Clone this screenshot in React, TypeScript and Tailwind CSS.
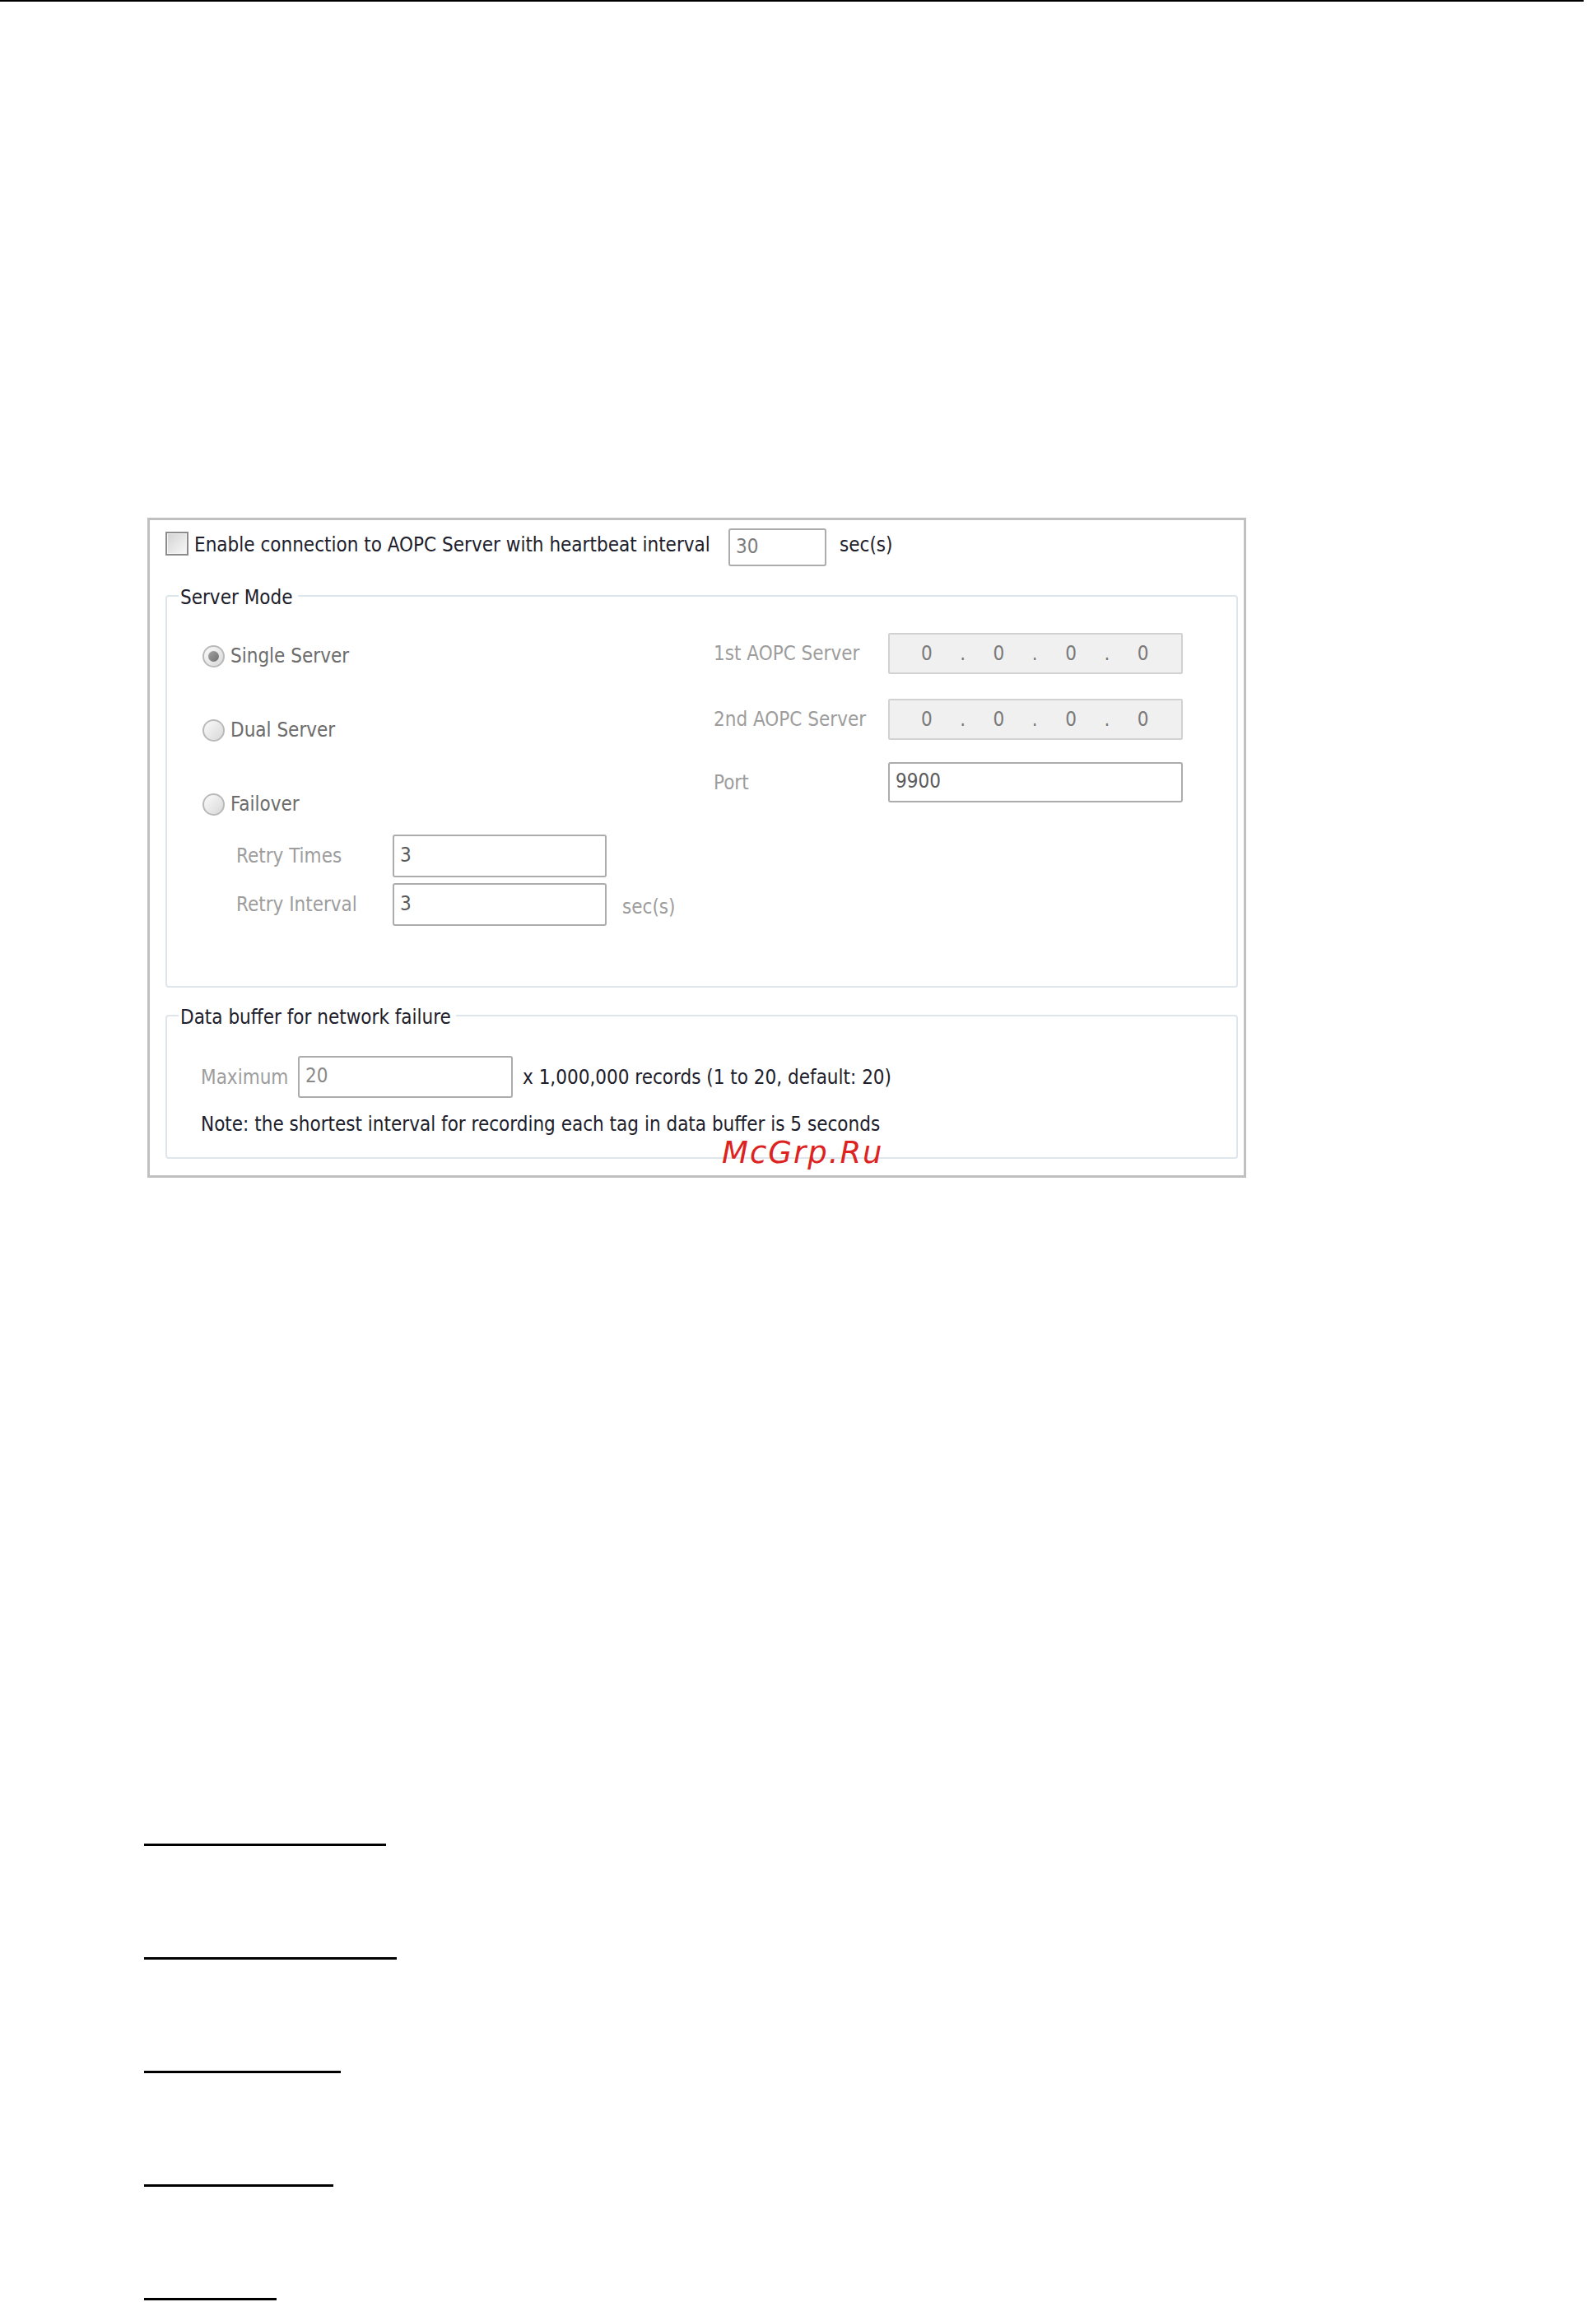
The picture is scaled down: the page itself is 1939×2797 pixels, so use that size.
import React from "react";

const font = { fontFamily: '"DejaVu Sans Condensed", "DejaVu Sans", sans-serif' };

const Radio: React.FC<{ checked?: boolean }> = ({ checked }) => (
  <div className="w-[27px] h-[27px] rounded-full border-2 border-[#b9b9b9] bg-linear-to-br from-[#fbfbfb] to-[#d8d8d8] flex items-center justify-center shrink-0">
    {checked && <div className="w-[13px] h-[13px] rounded-full bg-linear-to-br from-[#a5a5a5] to-[#6f6f6f]" />}
  </div>
);

const TextBox: React.FC<{ value: string; w: string; h: string; color: string }> = ({ value, w, h, color }) => (
  <div className={`${w} ${h} border-2 border-[#acacac] rounded-[3px] bg-white flex items-center pl-[7px] pb-[3px] shrink-0 text-[24px] ${color}`}>
    {value}
  </div>
);

const IpBox: React.FC = () => (
  <div className="w-[358px] h-[50px] border-2 border-[#d2d2d2] rounded-[2px] bg-[#f0f0f0] flex items-baseline pt-[5px] pl-[38px] gap-[33.5px] text-[24px] text-[#7a7a7a] shrink-0">
    <span>0</span>
    <span>.</span>
    <span>0</span>
    <span>.</span>
    <span>0</span>
    <span>.</span>
    <span>0</span>
  </div>
);

export default function App() {
  return (
    <div className="w-[1939px] min-h-[2797px] bg-white" style={font}>
      <div className="w-[1924px] h-[2px] bg-black" />

      {/* dialog panel */}
      <div className="relative mt-[627px] ml-[179px] w-[1335px] border-[3px] border-[#c0c0c0] bg-white">
        {/* heartbeat row */}
        <div className="flex items-start pt-[10px] pl-[19px] h-[56px] box-content">
          <div className="mt-[4px] w-[28px] h-[29px] border-2 border-[#8c8c8c] shrink-0">
            <div className="w-full h-full border border-[#f5f5f5] bg-linear-to-br from-[#d4d4d4] to-[#f7f7f7]" />
          </div>
          <div className="ml-[7px] mt-[5px] w-[649px] leading-[30px] text-[24px] text-[#20202c] whitespace-nowrap">
            Enable connection to AOPC Server with heartbeat interval
          </div>
          <TextBox value="30" w="w-[119px]" h="h-[46px]" color="text-[#7d7d7d]" />
          <div className="ml-[16px] mt-[5px] leading-[30px] text-[24px] text-[#20202c]">sec(s)</div>
        </div>

        {/* Server Mode */}
        <fieldset className="mt-[10px] ml-[19px] w-[1303px] border-2 border-[#dfe6eb] rounded-[4px]">
          <legend className="ml-[14px] pl-[2px] pr-[6px] pt-[4px] leading-[28px] text-[24px] text-[#20202c]">Server Mode</legend>
          <div className="flex pb-[73px]">
            <div className="w-[664px] pl-[43px] flex flex-col">
              <div className="mt-[32px] h-[50px] flex items-center gap-[7px] text-[24px] text-[#6c6c6c]">
                <Radio checked />
                <span>Single Server</span>
              </div>
              <div className="mt-[40px] h-[50px] flex items-center gap-[7px] text-[24px] text-[#6c6c6c]">
                <Radio />
                <span>Dual Server</span>
              </div>
              <div className="mt-[40px] h-[50px] flex items-center gap-[7px] text-[24px] text-[#6c6c6c]">
                <Radio />
                <span>Failover</span>
              </div>
              <div className="mt-[12px] ml-[41px] flex items-center">
                <span className="w-[190px] text-[24px] text-[#9d9d9d]">Retry Times</span>
                <TextBox value="3" w="w-[260px]" h="h-[52px]" color="text-[#5a5a5a]" />
              </div>
              <div className="mt-[7px] ml-[41px] flex items-center">
                <span className="w-[190px] text-[24px] text-[#9d9d9d]">Retry Interval</span>
                <TextBox value="3" w="w-[260px]" h="h-[52px]" color="text-[#5a5a5a]" />
                <span className="ml-[19px] mt-[6px] text-[24px] text-[#9d9d9d]">sec(s)</span>
              </div>
            </div>

            <div className="flex flex-col">
              <div className="mt-[29px] flex items-center">
                <span className="w-[212px] text-[24px] text-[#9d9d9d]">1st AOPC Server</span>
                <IpBox />
              </div>
              <div className="mt-[30px] flex items-center">
                <span className="w-[212px] text-[24px] text-[#9d9d9d]">2nd AOPC Server</span>
                <IpBox />
              </div>
              <div className="mt-[27px] flex items-center">
                <span className="w-[212px] text-[24px] text-[#9d9d9d]">Port</span>
                <TextBox value="9900" w="w-[358px]" h="h-[49px]" color="text-[#5a5a5a]" />
              </div>
            </div>
          </div>
        </fieldset>

        {/* Data buffer */}
        <fieldset className="mt-[18px] mb-[20px] ml-[19px] w-[1303px] border-2 border-[#dfe6eb] rounded-[4px]">
          <legend className="ml-[14px] pl-[2px] pr-[6px] pt-[4px] leading-[28px] text-[24px] text-[#20202c]">
            Data buffer for network failure
          </legend>
          <div className="pl-[41px] pb-[25px] flex flex-col">
            <div className="mt-[33px] flex items-center">
              <span className="w-[118px] text-[24px] text-[#9d9d9d]">Maximum</span>
              <TextBox value="20" w="w-[261px]" h="h-[51px]" color="text-[#8a8a8a]" />
              <span className="ml-[12px] text-[24px] text-[#20202c]">x 1,000,000 records (1 to 20, default: 20)</span>
            </div>
            <div className="mt-[17px] h-[30px] flex items-center text-[24px] text-[#20202c] whitespace-nowrap">
              Note: the shortest interval for recording each tag in data buffer is 5 seconds
            </div>
          </div>
        </fieldset>

        {/* watermark */}
        <div
          className="absolute left-[695px] top-[750px] text-[37px] leading-[37px] italic tracking-[2px] text-[#dd2222]"
          style={{ fontFamily: '"DejaVu Sans", sans-serif' }}
        >
          McGrp.Ru
        </div>
      </div>

      {/* underlined headings */}
      <div className="pl-[175px] mt-[809px] flex flex-col gap-[135px]">
        <div className="w-[294px] h-[3px] bg-black" />
        <div className="w-[307px] h-[3px] bg-black" />
        <div className="w-[239px] h-[3px] bg-black" />
        <div className="w-[230px] h-[3px] bg-black" />
        <div className="w-[161px] h-[3px] bg-black" />
      </div>
    </div>
  );
}
